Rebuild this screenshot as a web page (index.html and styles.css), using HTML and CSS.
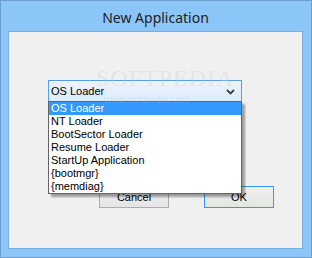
FILE: index.html
```html
<!DOCTYPE html>
<html lang="en">
<head>
    <meta charset="UTF-8">
    <title>New Application</title>
    <link rel="stylesheet" href="styles.css">
</head>
<body>

    <div class="window">
        <div class="titlebar">New Application</div>
        <div class="client">
            <div class="combo-wrap">
                <div class="combo">
                    <span>OS Loader</span>
                    <svg class="chevron" width="9" height="6" viewBox="0 0 9 6"><path d="M1 1 L4.5 4.5 L8 1" fill="none" stroke="#404040" stroke-width="1.8"/></svg>
                </div>
                <ul class="dropdown">
                    <li class="selected">OS Loader</li>
                    <li>NT Loader</li>
                    <li>BootSector Loader</li>
                    <li>Resume Loader</li>
                    <li>StartUp Application</li>
                    <li>{bootmgr}</li>
                    <li>{memdiag}</li>
                </ul>
            </div>
            <div class="buttons">
                <button class="btn">Cancel</button>
                <button class="btn default">OK</button>
            </div>
        </div>
        <div class="watermark">SOFTPEDIA<span>www.softpedia.com</span></div>
    </div>

</body>
</html>
```

FILE: styles.css
```css
body {
    margin: 0;
    overflow: hidden;
    font-family: "Liberation Sans", Arial, sans-serif;
}
.window {
    position: relative;
    width: 312px;
    height: 258px;
    box-sizing: border-box;
    border: 1px solid #6e9ccd;
    background: #8cc6f8;
    padding: 0 8px 8px 7px;
    display: flex;
    flex-direction: column;
}
.titlebar {
    height: 30px;
    text-align: center;
    font-family: "Noto Sans", sans-serif;
    font-size: 14px;
    line-height: 33px;
    color: #1e1e1e;
}
.client {
    flex: 1;
    background: #f0f0f0;
    border: 1px solid #79aee0;
    padding: 48px 0 0 39px;
}
.combo-wrap {
    position: relative;
    width: 194px;
}
.combo {
    height: 20px;
    border: 1px solid #569de5;
    background: linear-gradient(#ecf4fc, #dcecfc);
    display: flex;
    align-items: center;
    justify-content: space-between;
    padding: 0 6px 0 2px;
    font-size: 11px;
    color: #000;
}
.chevron {
    margin-top: 1px;
}
.dropdown {
    position: absolute;
    left: 0;
    top: 21px;
    width: 192px;
    margin: 0;
    padding: 0;
    list-style: none;
    background: #fff;
    border: 1px solid #646464;
    box-shadow: 3px 3px 2px rgba(0, 0, 0, 0.35);
    z-index: 2;
}
.dropdown li {
    height: 13px;
    line-height: 13px;
    font-size: 11px;
    padding-left: 2px;
    color: #000;
}
.dropdown li.selected {
    background: #3399ff;
    color: #fff;
}
.buttons {
    display: flex;
    gap: 35px;
    margin: 84px 0 0 51px;
}
.btn {
    width: 70px;
    height: 22px;
    box-sizing: border-box;
    border: 1px solid #acacac;
    background: linear-gradient(#f0f0f0, #e5e5e5);
    font-family: "Liberation Sans", Arial, sans-serif;
    font-size: 11px;
    color: #000;
    padding: 0;
}
.btn.default {
    border-color: #3399ff;
}
.watermark {
    position: absolute;
    left: 95px;
    top: 64px;
    font-family: "Liberation Serif", serif;
    font-size: 24px;
    letter-spacing: 1px;
    color: rgba(200, 200, 200, 0.3);
    z-index: 3;
    pointer-events: none;
}
.watermark span {
    display: block;
    font-family: "Liberation Sans", sans-serif;
    font-size: 10px;
    letter-spacing: 0;
    margin: 2px 0 0 8px;
}
```
